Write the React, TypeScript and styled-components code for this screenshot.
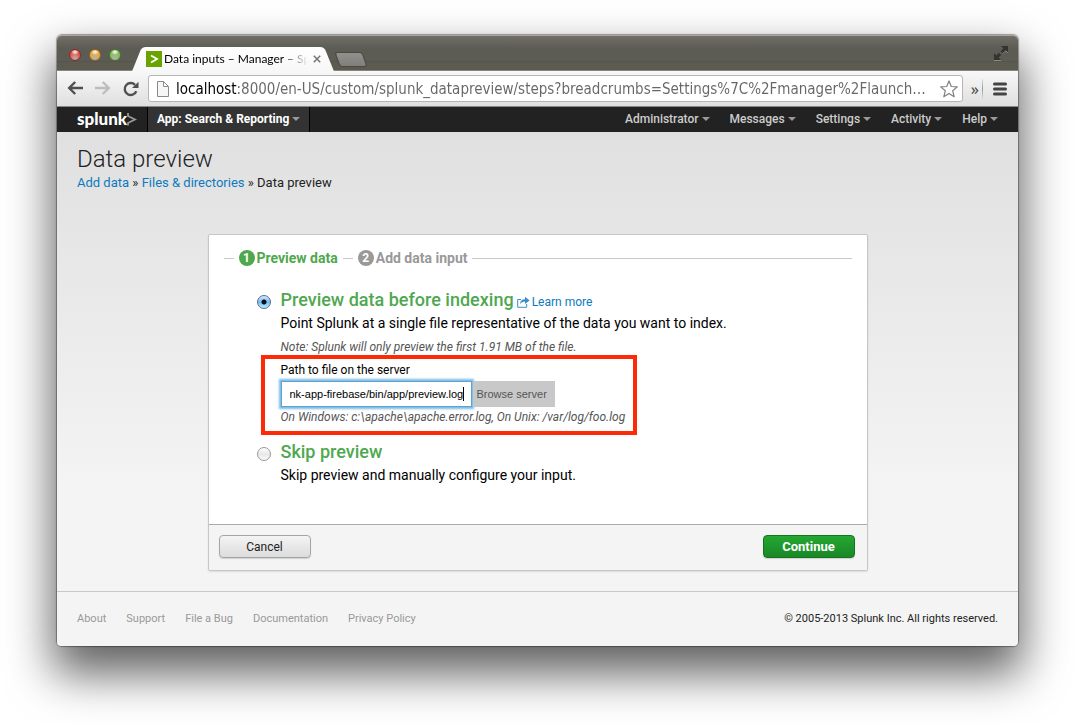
import React, { useState } from "react";
import styled, { createGlobalStyle } from "styled-components";

const GlobalStyle = createGlobalStyle`
  * { box-sizing: border-box; }
  body { margin: 0; background: #fff; font-family: Roboto, "Liberation Sans", sans-serif; color: #000; }
  h1, h2, p, nav, ol, ul { margin: 0; padding: 0; }
  button, input { font-family: inherit; margin: 0; }
`;

const Desktop = styled.div`
  padding: 35px 57px 79px;
  overflow: hidden;
`;

const BrowserWindow = styled.div`
  border-radius: 5px;
  box-shadow: 0 0 1px 1px rgba(0, 0, 0, 0.35), 0 24px 46px 4px rgba(0, 0, 0, 0.62);
`;

const TitleBar = styled.div`
  display: flex;
  align-items: flex-end;
  height: 36px;
  padding: 0 10px 0 12px;
  border-radius: 5px 5px 0 0;
  border-top: 1px solid #a5a5a2;
  border-bottom: 1px solid #85847f;
  background: linear-gradient(#716f68, #5c5b54 12px, #5c5b54 25px, #55544d 25px, #55544d 26px, #5b5b50 26px);
`;

const Lights = styled.div`
  display: flex;
  gap: 8px;
  align-self: center;
  padding-top: 4px;
`;

const Light = styled.button<{ $tone: string; $deep: string }>`
  width: 12px;
  height: 12px;
  padding: 0;
  border: 1px solid ${(p) => p.$deep};
  border-radius: 50%;
  background: radial-gradient(ellipse 4px 3px at 50% 20%, #fff, transparent), radial-gradient(circle at 50% 80%, #fff8, ${(p) => p.$tone} 65%);
`;

const Tab = styled.div`
  position: relative;
  z-index: 0;
  display: flex;
  align-items: center;
  width: 192px;
  height: 23px;
  margin-left: 16px;
  padding: 0 8px 0 9px;
  &::before,
  &::after {
    content: "";
    position: absolute;
    z-index: -1;
    top: 0;
    bottom: -1px;
    background: linear-gradient(#fff, #f7f7f7);
  }
  &::before { left: 0; right: 40px; border-radius: 4px 0 0 0; transform: skewX(-22deg); }
  &::after { right: 0; left: 40px; border-radius: 0 4px 0 0; transform: skewX(22deg); }
`;

const TabTitle = styled.span`
  flex: 1;
  margin-left: 2px;
  white-space: nowrap;
  font: 12px/16px Lato, sans-serif;
  -webkit-mask-image: linear-gradient(90deg, #000 118px, transparent 144px);
  mask-image: linear-gradient(90deg, #000 118px, transparent 144px);
`;

const IconButton = styled.button`
  display: flex;
  padding: 0;
  border: 0;
  background: none;
`;

const NewTab = styled.button`
  width: 28px;
  height: 15px;
  margin: 0 0 3px 8px;
  padding: 0;
  border: 1px solid #4a4943;
  border-radius: 3px;
  background: linear-gradient(#92918d, #7f7e7a);
  transform: skewX(20deg);
`;

const FullScreen = styled(IconButton)`
  margin: 0 0 9px auto;
`;

const Toolbar = styled.div`
  display: flex;
  align-items: center;
  height: 36px;
  padding: 0 11px 0 10px;
  border-bottom: 1px solid #888;
  background: linear-gradient(#f8f8f8, #dfdfdf);
`;

const NavButtons = styled.div`
  display: flex;
  gap: 12px;
`;

const AddressBar = styled.div`
  display: flex;
  flex: 1;
  align-items: center;
  height: 27px;
  margin-left: 9px;
  padding: 0 4px 0 8px;
  border: 1px solid #b5b5b5;
  border-radius: 3px;
  background: #fff;
`;

const Address = styled.input`
  flex: 1;
  min-width: 0;
  height: 22px;
  margin-left: 7px;
  padding: 0;
  border: 0;
  outline: 0;
  font: 15px/22px "DejaVu Sans Condensed", "DejaVu Sans", sans-serif;
  color: transparent;
  background: linear-gradient(90deg, #000 62px, #666 62px);
  -webkit-background-clip: text;
  background-clip: text;
`;

const More = styled.button`
  margin-left: 8px;
  padding: 0;
  border: 0;
  background: none;
  font: 16px/20px "Noto Sans", sans-serif;
  color: #444;
`;

const Divider = styled.span`
  width: 1px;
  height: 20px;
  margin: 0 10px 0 3px;
  background: linear-gradient(#ddd, #999, #ddd);
`;

const AppBar = styled.nav`
  display: flex;
  align-items: stretch;
  height: 25px;
  padding: 0 20px;
  background: #222;
`;

const Logo = styled.a`
  display: flex;
  align-items: center;
  width: 70px;
  padding-bottom: 2px;
  color: #fff;
  text-decoration: none;
  font: 900 17px/22px Lato, sans-serif;
`;

const MenuButton = styled.button<{ $active?: boolean }>`
  display: flex;
  align-items: center;
  gap: 3px;
  padding: ${(p) => (p.$active ? "0 9px 2px" : "0 0 2px")};
  border: solid #000;
  border-width: ${(p) => (p.$active ? "0 1px" : "0")};
  background: ${(p) => (p.$active ? "#333" : "none")};
  color: ${(p) => (p.$active ? "#fff" : "#ccc")};
  font-size: 12px;
  line-height: 16px;
  font-weight: ${(p) => (p.$active ? 700 : 500)};
  &::after {
    content: "";
    border: solid transparent;
    border-width: 4px 4px 0;
    border-top-color: #999;
  }
`;

const Menus = styled.div`
  display: flex;
  gap: 20px;
  margin-left: auto;
`;

const Content = styled.main`
  padding: 13px 20px 20px;
  background: linear-gradient(#e0e0e0, #f4f4f4 360px);
`;

const PageTitle = styled.h1`
  font-size: 24px;
  line-height: 28px;
  font-weight: 300;
  color: #222;
`;

const Link = styled.a`
  color: #0d7abf;
  text-decoration: none;
`;

const Breadcrumbs = styled.nav`
  font-size: 13px;
  line-height: 20px;
  color: #222;
`;

const Card = styled.form`
  max-width: 660px;
  margin: 41px auto 0;
  border: 1px solid #c6c6c6;
  border-radius: 2px;
  background: #fff;
  box-shadow: 0 1px 2px rgba(0, 0, 0, 0.1);
`;

const CardBody = styled.div`
  padding: 15px 15px 39px;
`;

const Steps = styled.ol`
  display: flex;
  align-items: center;
  height: 16px;
  margin-bottom: 22px;
  list-style: none;
  &::before,
  &::after {
    content: "";
    width: 10px;
    height: 1px;
    background: #c8c8c8;
  }
  &::after { flex: 1; }
`;

const Step = styled.li<{ $active?: boolean }>`
  display: flex;
  align-items: center;
  gap: 2px;
  margin: 0 5px;
  color: ${(p) => (p.$active ? "#4fa84f" : "#999")};
  font-size: 14px;
  line-height: 16px;
  font-weight: 700;
`;

const StepNumber = styled.span<{ $active?: boolean }>`
  width: 16px;
  height: 16px;
  border-radius: 50%;
  background: ${(p) => (p.$active ? "#4fa84f" : "#999")};
  color: #fff;
  font-size: 12px;
  line-height: 16px;
  text-align: center;
`;

const StepGap = styled.li`
  width: 10px;
  height: 1px;
  background: #c8c8c8;
`;

const Option = styled.section`
  display: grid;
  grid-template-columns: 14px 1fr;
  column-gap: 10px;
  padding-left: 33px;
`;

const Radio = styled.input`
  appearance: none;
  width: 14px;
  height: 14px;
  margin-top: 7px;
  border: 1px solid #999;
  border-radius: 50%;
  background: linear-gradient(#fff, #e8e8e8 50%, #fafafa);
  &:checked {
    border-color: #5a6a9a;
    background: radial-gradient(circle, #012 2px, transparent 3px), linear-gradient(#d8ebfa, #7ab8ec 50%, #b8f0ff);
  }
`;

const OptionHead = styled.div`
  display: flex;
  align-items: center;
  gap: 3px;
`;

const OptionTitle = styled.h2`
  font-size: 18px;
  line-height: 24px;
  font-weight: 500;
  color: #4fa84f;
`;

const LearnMore = styled(Link)`
  display: flex;
  align-items: center;
  gap: 2px;
  padding-top: 4px;
  font-size: 12px;
  line-height: 16px;
`;

const Text = styled.p`
  margin-top: 1px;
  font-size: 14px;
  line-height: 20px;
`;

const Hint = styled.p<{ $top: number }>`
  margin-top: ${(p) => p.$top}px;
  font-size: 12px;
  line-height: 16px;
  font-style: italic;
  white-space: nowrap;
  color: #555;
`;

const Highlight = styled.div`
  width: 376px;
  max-width: 100%;
  margin: 0 0 5px -20px;
  padding: 3px 16px 6px;
  border: 4px solid #fc2a06;
`;

const FieldLabel = styled.label`
  display: block;
  font-size: 12px;
  line-height: 16px;
`;

const FieldRow = styled.div`
  display: flex;
  margin-top: 3px;
`;

const PathInput = styled.input`
  width: 191px;
  height: 26px;
  padding: 0 8px;
  border: 1px solid #5aa5d6;
  outline: 0;
  box-shadow: 0 0 2px 2px #7dbbe2;
  font: 11px/14px "Liberation Sans", Arial, sans-serif;
  color: #000;
  background: linear-gradient(#000, #000) 181px center / 1px 14px no-repeat #fff;
`;

const BrowseButton = styled.button`
  height: 26px;
  margin-left: 1px;
  padding: 0 8px 0 4px;
  border: 0;
  background: #c8c8c8;
  font: 11px/14px "Liberation Sans", Arial, sans-serif;
  color: #555;
`;

const Actions = styled.div`
  display: flex;
  justify-content: space-between;
  padding: 10px 12px 12px 10px;
  border-top: 1px solid #aaa;
  background: #f4f4f4;
`;

const ActionButton = styled.button<{ $primary?: boolean }>`
  width: 92px;
  height: 23px;
  padding: 0;
  border: 1px solid ${(p) => (p.$primary ? "#14751c" : "#a5a5a5")};
  border-radius: 4px;
  background: ${(p) => (p.$primary ? "linear-gradient(#23a832, #1a8727)" : "linear-gradient(#f4f4f4, #dcdcdc)")};
  box-shadow: 0 1px 1px rgba(0, 0, 0, 0.15);
  color: ${(p) => (p.$primary ? "#fff" : "#222")};
  font-size: ${(p) => (p.$primary ? 13 : 12)}px;
  line-height: 16px;
  font-weight: ${(p) => (p.$primary ? 700 : 400)};
`;

const Footer = styled.footer`
  display: flex;
  align-items: center;
  justify-content: space-between;
  height: 55px;
  padding: 0 20px;
  border-top: 1px solid #c8c8c8;
  border-radius: 0 0 4px 4px;
  background: #f4f4f4;
  font-size: 11px;
  line-height: 14px;
  color: #222;
`;

const FooterLinks = styled.nav`
  display: flex;
  gap: 20px;
`;

const FooterLink = styled(Link)`
  color: #999;
`;

const ArrowIcon = ({ color, flip }: { color: string; flip?: boolean }) => (
  <svg width="16" height="14" viewBox="0 0 16 14" fill="none" stroke={color} strokeWidth="2.4" transform={flip ? "scale(-1 1)" : undefined}>
    <path d="M8.2 1 2.2 7l6 6M2.4 7H16" />
  </svg>
);

const menus = ["Administrator", "Messages", "Settings", "Activity", "Help"];
const footerLinks = ["About", "Support", "File a Bug", "Documentation", "Privacy Policy"];

export default function App() {
  const [mode, setMode] = useState("preview");
  const [path, setPath] = useState("nk-app-firebase/bin/app/preview.log");

  return (
    <>
      <GlobalStyle />
      <Desktop>
        <BrowserWindow>
          <TitleBar>
            <Lights>
              <Light $tone="#e8473f" $deep="#8f2a25" aria-label="Close" />
              <Light $tone="#efa832" $deep="#94651e" aria-label="Minimize" />
              <Light $tone="#7fbf4d" $deep="#4a7a2a" aria-label="Zoom" />
            </Lights>
            <Tab>
              <svg width="16" height="16" viewBox="0 0 16 16">
                <rect width="16" height="16" fill="#69a300" />
                <path d="M5 4.5 11 8l-6 3.500" fill="none" stroke="#fff" strokeWidth="1.800" />
              </svg>
              <TabTitle>Data inputs – Manager – Sp</TabTitle>
              <IconButton aria-label="Close tab">
                <svg width="8" height="8" viewBox="0 0 8 8" stroke="#777" strokeWidth="1.600">
                  <path d="M.8.8l6.400 6.400M7.200.8.8 7.200" />
                </svg>
              </IconButton>
            </Tab>
            <NewTab aria-label="New tab" />
            <FullScreen aria-label="Full screen">
              <svg width="14" height="15" viewBox="0 0 14 15">
                <path d="M7 0h7v7l-2.300-2.300L9 7.500 6.700 5.200 9.400 2.400zM0 7l2.400 2.400L5 6.800 7.200 9 4.600 11.600 7 14H0z" fill="#34332f" />
                <path d="M0 14.500h7M9 7.500l2.700-2.800L14 7" stroke="#8b8a85" fill="none" />
              </svg>
            </FullScreen>
          </TitleBar>
          <Toolbar>
            <NavButtons>
              <IconButton aria-label="Back"><ArrowIcon color="#4f4f4f" /></IconButton>
              <IconButton aria-label="Forward"><ArrowIcon color="#bdbdbd" flip /></IconButton>
              <IconButton aria-label="Reload">
                <svg width="16" height="16" viewBox="0 0 16 16">
                  <path d="M13.300 10.300A6 6 0 1 1 12 3.800" fill="none" stroke="#4f4f4f" strokeWidth="2.400" />
                  <path d="M15.500.8V7H9z" fill="#4f4f4f" />
                </svg>
              </IconButton>
            </NavButtons>
            <AddressBar>
              <svg width="12" height="16" viewBox="0 0 12 16" fill="#f6f6f6" stroke="#8a8a8a">
                <path d="M.5.5h6l5 5v10H.5zM6.500.5v5h5" />
              </svg>
              <Address
                aria-label="Address"
                readOnly
                value="localhost:8000/en-US/custom/splunk_datapreview/steps?breadcrumbs=Settings%7C%2Fmanager%2Flaunch…"
              />
              <IconButton aria-label="Bookmark">
                <svg width="18" height="18" viewBox="0 0 18 18" fill="#fff" stroke="#808080" strokeWidth="1.200" strokeLinejoin="round">
                  <path d="M9 .9l2.300 5.600 6 .4-4.600 3.900 1.500 6L9 13.500l-5.200 3.300 1.500-6L.7 6.900l6-.4z" />
                </svg>
              </IconButton>
            </AddressBar>
            <More aria-label="More extensions">»</More>
            <Divider />
            <IconButton aria-label="Menu">
              <svg width="14" height="14" viewBox="0 0 14 14" stroke="#444" strokeWidth="3" strokeLinecap="round">
                <path d="M1.500 2h11M1.500 7h11M1.500 12h11" />
              </svg>
            </IconButton>
          </Toolbar>
          <AppBar>
            <Logo href="#home">
              splunk
              <svg width="10" height="14" viewBox="0 0 10 14" fill="none" stroke="#999" strokeWidth="1.800">
                <path d="M1 1v3l7 3.500-7 3.500v2.500" />
              </svg>
            </Logo>
            <MenuButton $active>App: Search &amp; Reporting</MenuButton>
            <Menus>
              {menus.map((m) => (
                <MenuButton key={m}>{m}</MenuButton>
              ))}
            </Menus>
          </AppBar>
          <Content>
            <PageTitle>Data preview</PageTitle>
            <Breadcrumbs>
              <Link href="#add">Add data</Link> » <Link href="#files">Files &amp; directories</Link> » Data preview
            </Breadcrumbs>
            <Card onSubmit={(e) => e.preventDefault()}>
              <CardBody>
                <Steps>
                  <Step $active><StepNumber $active>1</StepNumber>Preview data</Step>
                  <StepGap aria-hidden />
                  <Step><StepNumber>2</StepNumber>Add data input</Step>
                </Steps>
                <Option>
                  <Radio type="radio" name="mode" id="preview" checked={mode === "preview"} onChange={() => setMode("preview")} />
                  <div>
                    <OptionHead>
                      <OptionTitle><label htmlFor="preview">Preview data before indexing</label></OptionTitle>
                      <LearnMore href="#learn">
                        <svg width="13" height="12" viewBox="0 0 13 12">
                          <path d="M4 3.500H.7v7.800h9V8" fill="none" stroke="#3b8ec9" />
                          <path d="M3 8.300c.2-3.300 1.800-5 5-5V.8L12.600 4.500 8 8V5.500C5.700 5.500 4.200 6.300 3 8.300z" fill="#3b8ec9" />
                        </svg>
                        Learn more
                      </LearnMore>
                    </OptionHead>
                    <Text>Point Splunk at a single file representative of the data you want to index.</Text>
                    <Hint $top={6}>Note: Splunk will only preview the first 1.91 MB of the file.</Hint>
                    <Highlight>
                      <FieldLabel htmlFor="path">Path to file on the server</FieldLabel>
                      <FieldRow>
                        <PathInput id="path" value={path} onChange={(e) => setPath(e.target.value)} />
                        <BrowseButton type="button">Browse server</BrowseButton>
                      </FieldRow>
                      <Hint $top={2}>On Windows: c:\apache\apache.error.log, On Unix: /var/log/foo.log</Hint>
                    </Highlight>
                  </div>
                </Option>
                <Option>
                  <Radio type="radio" name="mode" id="skip" checked={mode === "skip"} onChange={() => setMode("skip")} />
                  <div>
                    <OptionTitle><label htmlFor="skip">Skip preview</label></OptionTitle>
                    <Text>Skip preview and manually configure your input.</Text>
                  </div>
                </Option>
              </CardBody>
              <Actions>
                <ActionButton type="button">Cancel</ActionButton>
                <ActionButton type="submit" $primary>Continue</ActionButton>
              </Actions>
            </Card>
          </Content>
          <Footer>
            <FooterLinks>
              {footerLinks.map((l) => (
                <FooterLink key={l} href="#footer">{l}</FooterLink>
              ))}
            </FooterLinks>
            <span>© 2005-2013 Splunk Inc. All rights reserved.</span>
          </Footer>
        </BrowserWindow>
      </Desktop>
    </>
  );
}
